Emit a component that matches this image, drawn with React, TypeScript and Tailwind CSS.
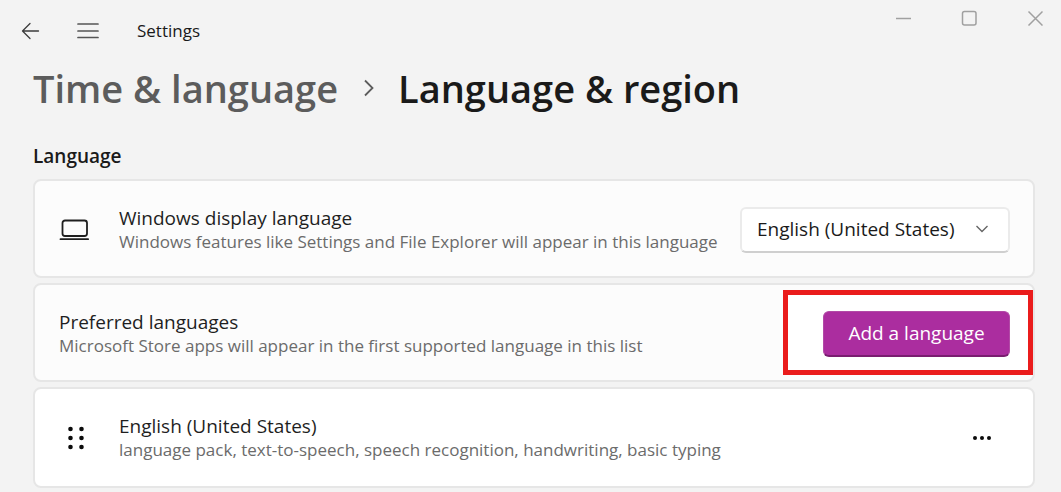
import React from 'react';

interface SettingCardProps {
  title: string;
  description: string;
  icon?: React.ReactNode;
  className?: string;
  children?: React.ReactNode;
}

const LaptopIcon = () => (
  <svg viewBox="0 0 30 24" className="w-[30px] h-6" fill="none" stroke="#1f1f1f" strokeWidth="1.8" strokeLinecap="round">
    <rect x="3.5" y="2.5" width="24.5" height="15.5" rx="2.5" />
    <path d="M1.5 21.2h27.6" />
  </svg>
);

const GripIcon = () => (
  <svg viewBox="0 0 30 24" className="w-[30px] h-6" fill="#0b0b0b">
    {[3, 12, 21].map((y) => (
      <React.Fragment key={y}>
        <circle cx="11.5" cy={y} r="2.3" />
        <circle cx="22.5" cy={y} r="2.3" />
      </React.Fragment>
    ))}
  </svg>
);

// One row of the settings list: optional icon, text and a control on the right
const SettingCard: React.FC<SettingCardProps> = ({
  title,
  description,
  icon,
  className = 'min-h-[99px] pt-[2px] bg-[#fcfcfc]',
  children
}) => {
  return (
    <li className={`flex items-center pl-6 pr-[23px] border-2 border-[#e6e6e6] rounded-lg ${className}`}>
      {icon && <span className="w-[60px] shrink-0">{icon}</span>}
      <div className="flex-1 min-w-0">
        <h3 className="text-[19px] leading-6 text-[#1f1f1f]">{title}</h3>
        <p className="text-[17px] leading-6 text-[#6b6b6b]">{description}</p>
      </div>
      {children}
    </li>
  );
};

const App: React.FC = () => {
  return (
    <div className="min-h-screen bg-[#f3f3f3] font-['Open_Sans','Noto_Sans',sans-serif] text-[#1a1a1a]">
      <header className="flex items-start justify-between pl-5 pr-[18px]">
        <div className="flex items-center pt-[19px]">
          <button type="button" aria-label="Back" className="w-[57px]">
            <svg viewBox="0 0 20 18" className="w-5 h-[18px]" fill="none" stroke="#3c3c3c" strokeWidth="1.3" strokeLinecap="round" strokeLinejoin="round">
              <path d="M18.5 9H2.5M10 1.5L2.5 9l7.5 7.5" />
            </svg>
          </button>
          <button type="button" aria-label="Open navigation" className="w-[60px]">
            <svg viewBox="0 0 22 18" className="w-[22px] h-[18px]" fill="none" stroke="#555" strokeWidth="1.7" strokeLinecap="round">
              <path d="M1 2h20M1 9h20M1 15.5h20" />
            </svg>
          </button>
          <span className="text-[17px] leading-6">Settings</span>
        </div>

        <div className="flex gap-[50px] pt-[10px]">
          <button type="button" aria-label="Minimize">
            <svg viewBox="0 0 16 16" className="w-4 h-4" fill="none" stroke="#a0a0a0" strokeWidth="1.5">
              <path d="M1 8.5h15" />
            </svg>
          </button>
          <button type="button" aria-label="Maximize">
            <svg viewBox="0 0 16 16" className="w-4 h-4" fill="none" stroke="#a0a0a0" strokeWidth="1.5">
              <rect x="1.5" y="1.5" width="13.5" height="13.5" rx="2" />
            </svg>
          </button>
          <button type="button" aria-label="Close">
            <svg viewBox="0 0 16 16" className="w-4 h-4" fill="none" stroke="#a0a0a0" strokeWidth="1.5">
              <path d="M1.5 1.5l14 14M15.5 1.5l-14 14" />
            </svg>
          </button>
        </div>
      </header>

      <main className="pl-[33px] pr-[26px] pb-1">
        <nav aria-label="Breadcrumb" className="flex items-center pt-[19px] text-[38px] leading-[52px] font-semibold">
          <a href="#time-language" className="text-[#5c5c5c]">Time &amp; language</a>
          <svg viewBox="0 0 12 18" className="w-3 h-[18px] mx-6" fill="none" stroke="#5c5c5c" strokeWidth="1.8">
            <path d="M3 1.5L10.5 9L3 16.5" />
          </svg>
          <h1>Language &amp; region</h1>
        </nav>

        <h2 className="pt-[30px] pb-[11px] text-[19px] leading-6 font-semibold">Language</h2>

        <ul className="flex flex-col gap-[5px]">
          <SettingCard
            title="Windows display language"
            description="Windows features like Settings and File Explorer will appear in this language"
            icon={<LaptopIcon />}
          >
            <div className="relative">
              <select
                aria-label="Windows display language"
                className="appearance-none w-[270px] h-[46px] pl-[15px] pr-12 rounded-md border-2 border-[#ebebeb] border-b-[#cfcfcf] bg-white text-[19px]"
              >
                <option>English (United States)</option>
              </select>
              <svg viewBox="0 0 14 8" className="absolute right-[21px] top-[18px] w-[14px] h-2 pointer-events-none" fill="none" stroke="#666" strokeWidth="1.4">
                <path d="M1.5 1L7 6.5L12.5 1" />
              </svg>
            </div>
          </SettingCard>

          <SettingCard
            title="Preferred languages"
            description="Microsoft Store apps will appear in the first supported language in this list"
          >
            <div className="relative isolate">
              <span className="absolute -z-10 -top-[21px] -bottom-[18px] -left-10 -right-[23px] border-[5px] border-[#ea1c1c] bg-white" />
              <button
                type="button"
                className="w-[187px] h-[46px] rounded-md border border-[#b24aa6] border-b-2 border-b-[#7a1d70] bg-[#ab2d9f] text-white text-[19px]"
              >
                Add a language
              </button>
            </div>
          </SettingCard>

          <SettingCard
            title="English (United States)"
            description="language pack, text-to-speech, speech recognition, handwriting, basic typing"
            icon={<GripIcon />}
            className="min-h-[101px] bg-white"
          >
            <button type="button" aria-label="More options" className="px-[18px]">
              <svg viewBox="0 0 20 6" className="w-5 h-[6px]" fill="#0b0b0b">
                <circle cx="3" cy="3" r="2" />
                <circle cx="10" cy="3" r="2" />
                <circle cx="17" cy="3" r="2" />
              </svg>
            </button>
          </SettingCard>
        </ul>
      </main>
    </div>
  );
};

export default App;
